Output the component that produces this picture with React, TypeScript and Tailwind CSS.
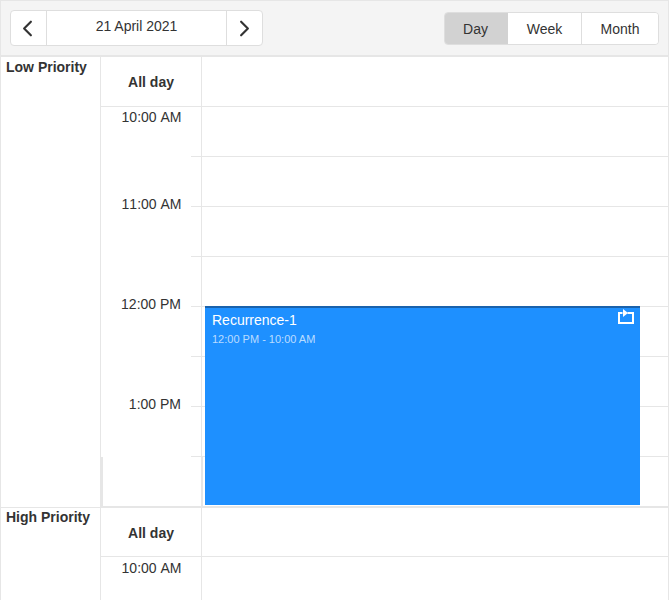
import { ChevronLeft, ChevronRight } from 'lucide-react';

const lowSlots = ['10:00 AM', '', '11:00 AM', '', '12:00 PM', '', '1:00 PM', ''];

function AllDayRow({ height, labelClass = '' }: { height: string; labelClass?: string }) {
  return (
    <div className={`flex ${height} border-b border-[#e6e6e6]`}>
      <div className={`w-[101px] shrink-0 border-r border-[#e6e6e6] flex items-center justify-center text-sm font-bold text-[#333] ${labelClass}`}>
        All day
      </div>
      <div className="flex-1" />
    </div>
  );
}

function Slot({ time, labelClass, last }: { time: string; labelClass: string; last?: boolean }) {
  return (
    <div className={`flex ${last ? 'h-[51px]' : 'h-[50px]'}`}>
      <div className={`w-[101px] shrink-0 border-r border-[#e6e6e6] flex flex-col ${last ? 'border-l-2 border-b-2' : ''}`}>
        <div className={`h-[16px] text-right text-sm leading-[16px] text-[#333] whitespace-nowrap [font-kerning:none] ${time.endsWith('PM') ? 'pr-[20px]' : 'pr-[19.5px]'} ${labelClass}`}>
          {time}
        </div>
        {!last && <div className="mt-auto self-end w-[10px] h-px bg-[#e6e6e6]" />}
      </div>
      <div className={`flex-1 border-[#e6e6e6] ${last ? 'border-l border-b-2' : 'border-b'}`} />
    </div>
  );
}

export default function App() {
  return (
    <div className="w-[669px] h-[600px] overflow-hidden bg-white font-['Liberation_Sans',sans-serif] text-[#333]">
      {/* Toolbar */}
      <div className="h-[57px] bg-[#f4f4f4] border border-[#e6e6e6] border-b-2 flex items-start justify-between px-[9px]">
        <div className="mt-[9px] flex h-[36px] w-[253px] bg-white border border-[#dedede] rounded-[4px]">
          <button className="w-[36px] flex items-center justify-center border-r border-[#dedede]">
            <ChevronLeft size={27} strokeWidth={1.9} className="text-[#333] -ml-[2px]" />
          </button>
          <div className="flex-1 text-center text-sm leading-[30px] text-[#333]">21 April 2021</div>
          <button className="w-[36px] flex items-center justify-center border-l border-[#dedede]">
            <ChevronRight size={27} strokeWidth={1.9} className="text-[#333]" />
          </button>
        </div>
        <div className="mt-[11px] flex h-[33px] text-sm text-[#333] border border-[#dedede] rounded-[4px] overflow-hidden">
          <div className="w-[63px] pr-[2px] bg-[#d2d2d2] flex items-center justify-center">Day</div>
          <div className="w-[74px] bg-white border-r border-[#dedede] flex items-center justify-center">Week</div>
          <div className="w-[76px] bg-white flex items-center justify-center">Month</div>
        </div>
      </div>

      {/* Low priority group */}
      <div className="flex h-[451px] border-x border-[#e6e6e6] relative">
        <div className="w-[100px] shrink-0 border-r border-b border-[#e6e6e6] pl-[5px] pt-[2px] text-sm font-bold leading-[16px]">
          Low Priority
        </div>
        <div className="flex-1 flex flex-col">
          <AllDayRow height="h-[50px]" />
          {lowSlots.map((time, i) => (
            <Slot
              key={i}
              time={time}
              labelClass={i === 0 ? 'mt-[2px]' : '-mt-[11px]'}
              last={i === lowSlots.length - 1}
            />
          ))}
        </div>

        {/* Event */}
        <div className="absolute left-[204px] top-[249px] w-[435px] h-[199px] bg-[#1e90ff] border-t-2 border-[#1a62ac] pl-[7px] pr-[6px] flex justify-between text-white">
          <div>
            <div className="mt-[4px] text-sm leading-[16px]">Recurrence-1</div>
            <div className="mt-[4px] text-[11px] leading-[14px] text-white/70">12:00 PM - 10:00 AM</div>
          </div>
          <svg width="16" height="15" viewBox="0 0 16 15" className="mt-[1px]">
            <path d="M4.5 4H1V14H15V4H9.5" fill="none" stroke="#fff" strokeWidth="2" />
            <path d="M5 0L10 4L5 8Z" fill="#fff" />
          </svg>
        </div>
      </div>

      {/* High priority group */}
      <div className="flex h-[100px] border-x border-[#e6e6e6]">
        <div className="w-[100px] shrink-0 border-r border-[#e6e6e6] pl-[5px] pt-[1px] text-sm font-bold leading-[16px]">
          High Priority
        </div>
        <div className="flex-1 flex flex-col">
          <AllDayRow height="h-[49px]" labelClass="pt-[2px]" />
          <Slot time="10:00 AM" labelClass="mt-[3px]" />
        </div>
      </div>
    </div>
  );
}
